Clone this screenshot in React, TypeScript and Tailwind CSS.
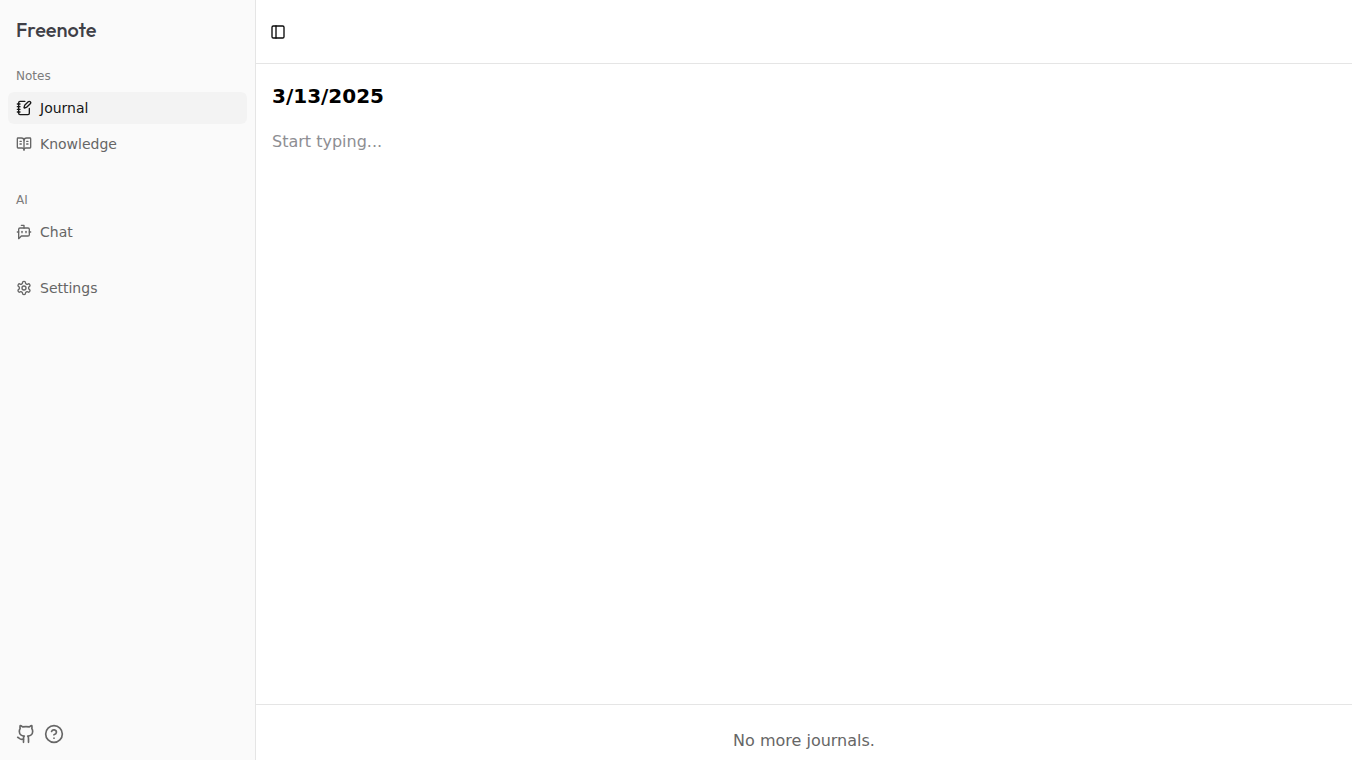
import type { ComponentType, ReactNode } from "react";
import {
  BookOpenText,
  CircleHelp,
  Github,
  NotebookPen,
  PanelLeft,
} from "lucide-react";
import clsx from "clsx";

type IconProps = { className?: string };

type NavItem = {
  title: string;
  url: string;
  icon: ComponentType<IconProps>;
  active?: boolean;
};

type NavGroup = {
  label?: string;
  items: NavItem[];
};

const StrokeIcon = ({
  className,
  children,
}: IconProps & { children: ReactNode }) => (
  <svg
    viewBox="0 0 24 24"
    fill="none"
    stroke="currentColor"
    strokeWidth={2}
    strokeLinecap="round"
    strokeLinejoin="round"
    aria-hidden="true"
    className={className}
  >
    {children}
  </svg>
);

const ChatIcon = ({ className }: IconProps) => (
  <StrokeIcon className={className}>
    <path d="M12 6V2H8" />
    <path d="m8 18-4 4V8a2 2 0 0 1 2-2h12a2 2 0 0 1 2 2v8a2 2 0 0 1-2 2Z" />
    <path d="M2 12h2" />
    <path d="M9 11v2" />
    <path d="M15 11v2" />
    <path d="M20 12h2" />
  </StrokeIcon>
);

const SettingsIcon = ({ className }: IconProps) => (
  <StrokeIcon className={className}>
    <path d="M12.22 2h-.44a2 2 0 0 0-2 2v.18a2 2 0 0 1-1 1.73l-.43.25a2 2 0 0 1-2 0l-.15-.08a2 2 0 0 0-2.73.73l-.22.38a2 2 0 0 0 .73 2.73l.15.1a2 2 0 0 1 1 1.72v.51a2 2 0 0 1-1 1.74l-.15.09a2 2 0 0 0-.73 2.73l.22.38a2 2 0 0 0 2.73.73l.15-.08a2 2 0 0 1 2 0l.43.25a2 2 0 0 1 1 1.73V20a2 2 0 0 0 2 2h.44a2 2 0 0 0 2-2v-.18a2 2 0 0 1 1-1.73l.43-.25a2 2 0 0 1 2 0l.15.08a2 2 0 0 0 2.73-.73l.22-.39a2 2 0 0 0-.73-2.73l-.15-.08a2 2 0 0 1-1-1.74v-.5a2 2 0 0 1 1-1.74l.15-.09a2 2 0 0 0 .73-2.73l-.22-.38a2 2 0 0 0-2.73-.73l-.15.08a2 2 0 0 1-2 0l-.43-.25a2 2 0 0 1-1-1.73V4a2 2 0 0 0-2-2z" />
    <circle cx="12" cy="12" r="3" />
  </StrokeIcon>
);

const groups: NavGroup[] = [
  {
    label: "Notes",
    items: [
      { title: "Journal", url: "#journal", icon: NotebookPen, active: true },
      { title: "Knowledge", url: "#knowledge", icon: BookOpenText },
    ],
  },
  {
    label: "AI",
    items: [{ title: "Chat", url: "#chat", icon: ChatIcon }],
  },
  {
    items: [{ title: "Settings", url: "#settings", icon: SettingsIcon }],
  },
];

const SidebarGroup = ({ label, items }: NavGroup) => (
  <div className="p-2">
    {label && (
      <h2 className="flex h-8 items-center px-2 text-xs text-[#7c7c7c]">
        {label}
      </h2>
    )}
    <ul className="flex flex-col gap-1">
      {items.map(({ title, url, icon: Icon, active }) => (
        <li key={title}>
          <a
            href={url}
            className={clsx(
              "flex h-8 items-center gap-2 rounded-md px-2 text-sm",
              active
                ? "bg-[#f3f3f3] text-neutral-900"
                : "text-[#666666] hover:bg-[#f3f3f3]"
            )}
          >
            <Icon className="size-4 shrink-0" />
            <span>{title}</span>
          </a>
        </li>
      ))}
    </ul>
  </div>
);

const Sidebar = () => (
  <aside className="flex w-64 shrink-0 flex-col border-r border-neutral-200 bg-[#fafafa]">
    <div className="px-4 pt-4 pb-2">
      <span className="block font-['Outfit','Lato',sans-serif] text-xl font-medium text-zinc-700">
        Freenote
      </span>
    </div>
    <nav className="flex flex-1 flex-col gap-2">
      {groups.map((group, index) => (
        <SidebarGroup key={index} {...group} />
      ))}
    </nav>
    <div className="flex gap-2 p-4 text-[#666666]">
      <a href="#github" aria-label="GitHub">
        <Github className="size-5" />
      </a>
      <a href="#help" aria-label="Help">
        <CircleHelp className="size-5" />
      </a>
    </div>
  </aside>
);

const App = () => {
  return (
    <div className="flex h-screen bg-white font-['DejaVu_Sans',sans-serif] text-neutral-950">
      <Sidebar />
      <main className="flex min-w-0 flex-1 flex-col">
        <header className="flex h-16 shrink-0 items-center border-b border-neutral-200 px-2">
          <button
            type="button"
            aria-label="Toggle sidebar"
            className="flex size-7 items-center justify-center rounded-md hover:bg-neutral-100"
          >
            <PanelLeft className="size-4" />
          </button>
        </header>
        <section className="flex flex-1 flex-col gap-4 border-b border-neutral-200 p-4">
          <h1 className="text-xl/8 font-bold text-black">3/13/2025</h1>
          <textarea
            aria-label="Journal entry"
            placeholder="Start typing..."
            className="w-full flex-1 resize-none text-base/7 outline-none placeholder:text-[#8e8e93]"
          />
        </section>
        <p className="px-4 pt-6 pb-[7px] text-center text-[#666666]">
          No more journals.
        </p>
      </main>
    </div>
  );
};

export default App;
